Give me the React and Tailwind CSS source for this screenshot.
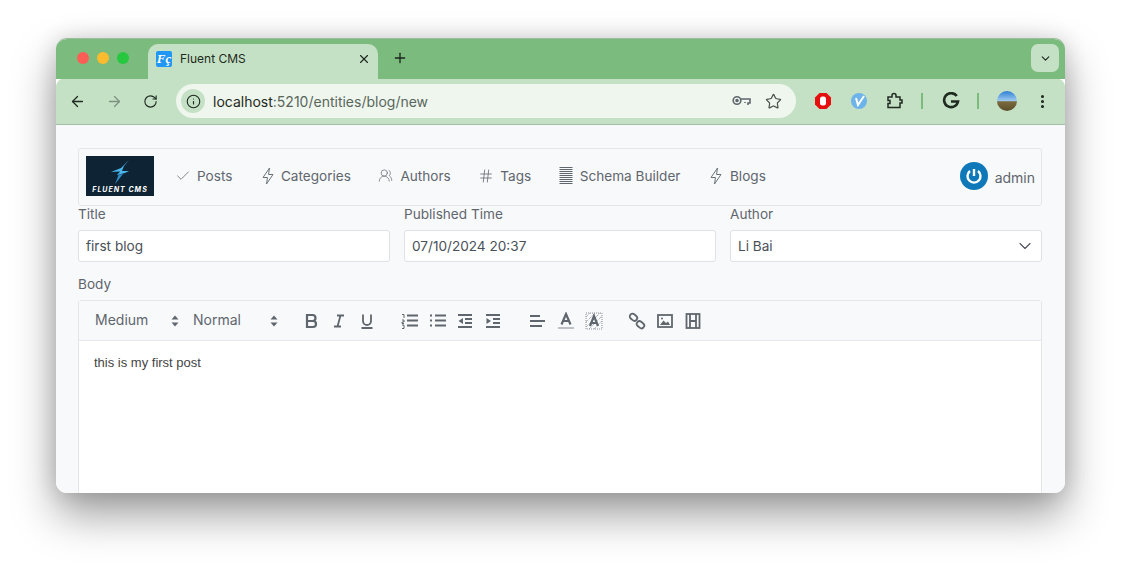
import React from 'react';
import {
  ArrowLeft,
  ArrowRight,
  Check,
  ChevronDown,
  EllipsisVertical,
  Hash,
  Info,
  Plus,
  RotateCw,
  Star,
  UsersRound,
  X,
} from 'lucide-react';

function ThinZap() {
  return (
    <svg width="16" height="18" viewBox="0 0 16 18" fill="none" stroke="#6b7278" strokeWidth="1" strokeLinejoin="round">
      <path d="M9.5 1 L3 10.5 H7.5 L6.5 17 L13 7.5 H8.5 Z" />
    </svg>
  );
}

function SchemaIcon() {
  return (
    <svg width="14" height="18" viewBox="0 0 14 18" stroke="#5f666d" strokeWidth="1">
      {[0.5, 2.5, 4.5, 6.5, 8.5, 10.5, 12.5, 14.5, 16.5].map((y) => (
        <line key={y} x1="0.5" x2="13.5" y1={y} y2={y} />
      ))}
    </svg>
  );
}

const navItems = [
  { label: 'Posts', icon: <Check size={16} strokeWidth={1.2} />, gap: 'gap-[6px]' },
  { label: 'Categories', icon: <ThinZap />, gap: 'gap-[5px]' },
  { label: 'Authors', icon: <UsersRound size={15} strokeWidth={1.1} />, gap: 'gap-[7px]' },
  { label: 'Tags', icon: <Hash size={16} strokeWidth={1.2} />, gap: 'gap-[6px]' },
  { label: 'Schema Builder', icon: <SchemaIcon />, gap: 'gap-[7px]' },
  { label: 'Blogs', icon: <ThinZap />, gap: 'gap-[6px]' },
];

function Logo() {
  return (
    <div className="w-[68px] h-10 mb-[3px] bg-[#0e2333] flex flex-col items-center justify-end pb-[2px]">
      <svg width="22" height="25" viewBox="0 0 22 25" className="mb-[1px]">
        <path d="M20 0 L12 8 L2 12 L11 11.5 L8 15 L16 13 L20 11 L13 11 L15 6 Z" fill="#49b4ea" />
        <path d="M11 11.5 L6 24 L14 14 L8 15 Z" fill="#2f8fcc" />
      </svg>
      <span className="text-[7px] leading-[8px] font-bold italic tracking-[1px] text-white whitespace-nowrap">FLUENT CMS</span>
    </div>
  );
}

function Field({ label, value, select }) {
  return (
    <div className="flex-1 min-w-0">
      <div className="text-[13.6px] leading-[17px] text-[#5f666d] h-6">{label}</div>
      <div className="h-8 bg-white border border-[#dee2e6] rounded-[3px] px-[7px] flex items-center justify-between text-[13.6px] text-[#495057]">
        <span>{value}</span>
        {select && <ChevronDown size={20} strokeWidth={1.3} className="text-[#495057] -mr-[1px]" />}
      </div>
    </div>
  );
}

function ToolIcon({ children, className }) {
  return (
    <svg width="18" height="18" viewBox="0 0 18 18" fill="none" stroke="#5f666d" strokeWidth="1.8" className={className}>
      {children}
    </svg>
  );
}

function Updown() {
  return (
    <svg width="8" height="12" viewBox="0 0 8 12" fill="#5f666d">
      <path d="M4 0.5 L7.5 4.5 H0.5 Z M4 11.5 L7.5 7.5 H0.5 Z" />
    </svg>
  );
}

export default function App() {
  return (
    <div className="h-[568px] w-[1121px] overflow-hidden bg-white pt-[38px] pl-14 font-['Inter',sans-serif]">
      <div className="w-[1009px] h-[455px] rounded-[11px] overflow-hidden flex flex-col bg-white shadow-[0_22px_44px_rgba(0,0,0,0.38),0_0_22px_rgba(0,0,0,0.14)] border-t border-[#9dbd9e]">
        <div className="h-10 bg-[#7cbb7e] flex items-end shrink-0 pl-3 relative">
          <div className="flex gap-2 items-center w-[80px] pl-[9px] pb-[15px]">
            <span className="w-3 h-3 rounded-full bg-[#fd5f57]" />
            <span className="w-3 h-3 rounded-full bg-[#febb2e]" />
            <span className="w-3 h-3 rounded-full bg-[#27c83f]" />
          </div>
          <div className="w-[230px] h-[35px] bg-[#c5e1c5] rounded-t-[10px] flex items-center pl-[8px] pr-[7px] pb-[6px] text-[12px] text-[#1f2a20]">
            <span className="w-4 h-4 rounded-[2px] bg-[#2196f3] text-white text-[13px] leading-4 text-center italic font-bold font-['Liberation_Serif',serif] shrink-0">Fç</span>
            <span className="ml-2 flex-1">Fluent CMS</span>
            <X size={14} strokeWidth={2} className="text-[#1f2a20]" />
          </div>
          <Plus size={16} strokeWidth={2} className="text-[#1b261c] ml-[14px] mb-[13px]" />
          <div className="ml-auto mr-[6px] mb-[7px] w-7 h-7 rounded-[7px] bg-[#c5e1c5] flex items-center justify-center">
            <ChevronDown size={13} strokeWidth={2.2} className="text-[#1f2a20]" />
          </div>
        </div>

        <div className="h-[47px] bg-[#c5e1c5] rounded-t-[9px] -mt-px shrink-0 border-b border-[#a5bfa6] flex items-center pl-[13px] pr-3">
          <ArrowLeft size={17} strokeWidth={1.8} className="text-[#1f2a20]" />
          <ArrowRight size={17} strokeWidth={1.8} className="text-[#7c9180] ml-5" />
          <RotateCw size={15} strokeWidth={1.8} className="text-[#1f2a20] ml-5" />
          <div className="ml-[18px] w-[620px] h-[34px] rounded-full bg-[#eef6ee] flex items-center pl-[5px] pr-[14px]">
            <span className="w-6 h-6 rounded-full bg-[#c5e1c5] flex items-center justify-center">
              <Info size={15} strokeWidth={1.8} className="text-[#1f2a20]" />
            </span>
            <span className="ml-2 text-[14px] text-[#1f2a20]">localhost<span className="text-[#5a665c]">:5210/entities/blog/new</span></span>
            <svg width="19" height="12" viewBox="0 0 19 12" fill="none" stroke="#5f666d" strokeWidth="1.6" className="ml-auto">
              <circle cx="5" cy="5.5" r="3.8" />
              <circle cx="5" cy="5.5" r="1" fill="#5f666d" />
              <path d="M9 4 H18 V8 H16 V10 M13 8 V7" />
            </svg>
            <Star size={17} strokeWidth={1.7} className="ml-[14px] text-[#4a524c]" />
          </div>
          <svg width="18" height="18" viewBox="0 0 18 18" className="ml-[18px]">
            <path d="M5.5 1 H12.5 L17 5.5 V12.5 L12.5 17 H5.5 L1 12.5 V5.5 Z" fill="#e60f0f" />
            <rect x="6" y="4.5" width="6" height="9" rx="2.5" fill="#fff" />
          </svg>
          <svg width="18" height="18" viewBox="0 0 18 18" className="ml-[18px]">
            <circle cx="9" cy="9" r="8" fill="#6eb3ea" />
            <path d="M6 6 L8 13 L14 4" fill="none" stroke="#fff" strokeWidth="2" />
          </svg>
          <svg width="18" height="18" viewBox="0 0 18 18" fill="none" stroke="#1f2a20" strokeWidth="1.5" className="ml-[18px]">
            <path d="M2 5 H6 V3.5 A2 2 0 0 1 10 3.5 V5 H14 V8 H16 V11 H14 V15.5 H2 V11.5 H4 V8.5 H2 Z" />
          </svg>
          <span className="w-[2px] h-[16px] bg-[#7cbb7e] ml-[17px]" />
          <svg width="18" height="18" viewBox="0 0 18 18" fill="none" stroke="#1f2a20" strokeWidth="2.6" className="ml-[19px]">
            <path d="M14.8 4 A7 7 0 1 0 16 9.5 H9" />
          </svg>
          <span className="w-[2px] h-[16px] bg-[#7cbb7e] ml-[17px]" />
          <span className="w-5 h-5 rounded-full ml-[18px] bg-[linear-gradient(180deg,#2d7fd6_0%,#9cc9ee_48%,#7a6a3c_54%,#5c4f2c_100%)]" />
          <EllipsisVertical size={17} strokeWidth={2.4} className="text-[#1f2a20] ml-[17px]" />
        </div>

        <div className="flex-1 min-h-0 bg-[#f8f9fb] pl-[22px] pr-[23px] pt-[23px]">
          <div className="h-[58px] border border-[#e3e6ea] rounded-[3px] flex items-center pl-[7px] pr-[6px]">
            <Logo />
            <div className="flex items-center ml-[21px] mb-[2px] gap-[27.5px] text-[#5f666d] text-[13.6px]">
              {navItems.map((item) => (
                <div key={item.label} className={`flex items-center ${item.gap}`}>
                  {item.icon}
                  <span>{item.label}</span>
                </div>
              ))}
            </div>
            <div className="ml-auto flex items-center gap-[7px] text-[14px] text-[#5f666d]">
              <span className="w-7 h-7 rounded-full bg-[#0f78b9] flex items-center justify-center mb-[2px]">
                <svg width="18" height="18" viewBox="0 0 18 18" fill="none" stroke="#fff" strokeWidth="2.4">
                  <path d="M5 4 A6.5 6.5 0 1 0 13 4" />
                  <path d="M9 2 V9" />
                </svg>
              </span>
              <span>admin</span>
            </div>
          </div>

          <div className="flex gap-[14px]">
            <Field label="Title" value="first blog" />
            <Field label="Published Time" value="07/10/2024 20:37" />
            <Field label="Author" value="Li Bai" select />
          </div>

          <div className="text-[13.6px] leading-[17px] text-[#5f666d] mt-[14px] h-6">Body</div>
          <div className="border border-[#e3e6ea] rounded-t-[3px] bg-white h-[300px]">
            <div className="h-10 bg-[#f8f9fb] border-b border-[#e3e6ea] flex items-center text-[14px] text-[#5f666d]">
              <span className="ml-4 w-[76px] mb-[2px]">Medium</span>
              <Updown />
              <span className="ml-[14px] w-[77px] mb-[2px]">Normal</span>
              <Updown />
              <div className="flex items-center ml-6 gap-[10px]">
                <ToolIcon><path strokeWidth="2.2" d="M5 3 H10.5 A3 3 0 0 1 10.5 9 H5 Z M5 9 H11 A3 3 0 0 1 11 15 H5 Z" /></ToolIcon>
                <ToolIcon><path d="M7 3.5 H14 M4 14.5 H11 M10.5 3.5 L7.5 14.5" /></ToolIcon>
                <ToolIcon><path d="M5 2.5 V9 A4 4 0 0 0 13 9 V2.5 M3.5 16 H14.5" /></ToolIcon>
              </div>
              <div className="flex items-center ml-[25px] gap-[10px]">
                <ToolIcon>
                  <path d="M6 3.5 H17 M6 8.5 H17 M6 13.5 H17" />
                  <path strokeWidth="1" d="M1 2.5 H3 V6 M1 8 H3 V10 H1 V11.5 H3 M1 13 H3 V16.5 H1" />
                </ToolIcon>
                <ToolIcon>
                  <path d="M6 3.5 H17 M6 8.5 H17 M6 13.5 H17 M1 3.5 H3 M1 8.5 H3 M1 13.5 H3" />
                </ToolIcon>
                <ToolIcon>
                  <path d="M1 3 H15 M8 7 H15 M8 11 H15 M1 15 H15" />
                  <path fill="#5f666d" stroke="none" d="M6 6 V12 L1.5 9 Z" />
                </ToolIcon>
                <ToolIcon>
                  <path d="M1 3 H15 M8 7 H15 M8 11 H15 M1 15 H15" />
                  <path fill="#5f666d" stroke="none" d="M1.5 6 V12 L6 9 Z" />
                </ToolIcon>
              </div>
              <div className="flex items-center ml-[26px] gap-[10px]">
                <ToolIcon><path strokeWidth="2.2" d="M1 4 H11 M1 9 H16 M1 14 H13" /></ToolIcon>
                <ToolIcon>
                  <path strokeWidth="2.2" d="M4.5 12.5 L9 2 L13.5 12.5 M6 9 H12" />
                  <path strokeWidth="1.4" stroke="#a4a9ae" d="M1 16 H17" />
                </ToolIcon>
                <ToolIcon>
                  <path strokeWidth="1" strokeDasharray="1 1" stroke="#8b9197" d="M1 1 H17 V17 H1 Z M1 5 L5 1 M1 10 L10 1 M1 15 L15 1 M4 17 L17 4 M9 17 L17 9" />
                  <path strokeWidth="2.2" d="M5 14 L9 4 L13 14 M6.5 11 H11.5" />
                </ToolIcon>
              </div>
              <div className="flex items-center ml-[25px] gap-[10px]">
                <ToolIcon>
                  <rect x="1.5" y="2.5" width="8" height="5.5" rx="2.7" transform="rotate(40 5.5 5.2)" />
                  <rect x="8.5" y="10" width="8" height="5.5" rx="2.7" transform="rotate(40 12.5 12.7)" />
                </ToolIcon>
                <ToolIcon>
                  <rect x="2" y="3" width="14" height="12" />
                  <path fill="#5f666d" stroke="none" d="M4 13 L7.5 8.5 L10 11 L12 9.5 L14 13 Z" />
                  <circle cx="6" cy="6.5" r="1" fill="#5f666d" stroke="none" />
                </ToolIcon>
                <ToolIcon>
                  <rect x="2.5" y="2" width="13" height="14" />
                  <path d="M6 2 V16 M12 2 V16 M6 9 H12" />
                </ToolIcon>
              </div>
            </div>
            <div className="pl-[15px] pt-3 text-[13px] leading-[20px] text-[#444] font-['Liberation_Sans',sans-serif]">this is my first post</div>
          </div>
        </div>
      </div>
    </div>
  );
}
